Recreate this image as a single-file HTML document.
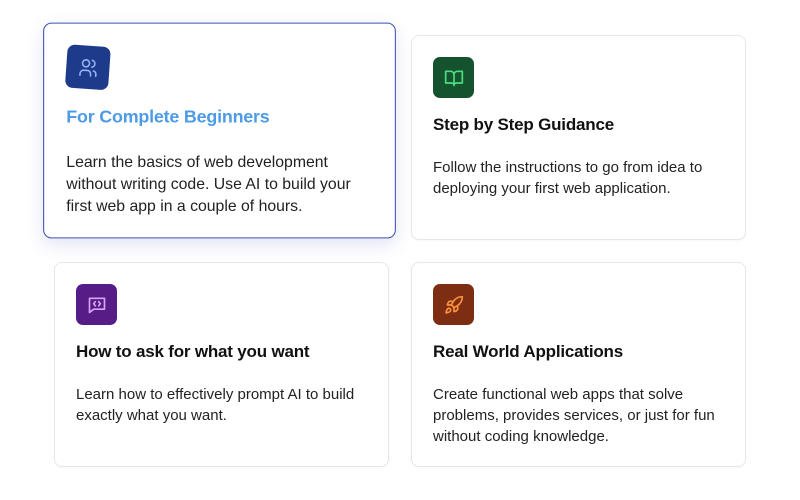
<!DOCTYPE html>
<html><head><style>
*{margin:0;padding:0;box-sizing:border-box}
body{width:800px;height:500px;background:#fff;font-family:"Liberation Sans",sans-serif;position:relative;overflow:hidden}
.card{position:absolute;width:335px;height:205px;border:1px solid #e7e7ea;border-radius:8px;background:#fff;box-shadow:0 1px 2px rgba(0,0,0,.04)}
.ic{position:absolute;left:21px;top:21px;width:41px;height:41px;border-radius:7px;display:flex;align-items:center;justify-content:center}
.t{position:absolute;left:21px;top:77px;font-size:17px;line-height:24px;font-weight:bold;color:#111;letter-spacing:-0.2px}
.d{position:absolute;left:21px;top:121px;width:290px;font-size:15px;line-height:21px;color:#222}
.hov{left:54px;top:35px;border:1px solid #3f51b5;transform:translate(-2px,-7px) scale(1.053);transform-origin:center;box-shadow:0 6px 16px rgba(63,81,181,.15)}
</style></head><body>
<div class="card hov">
 <div class="ic" style="background:#1e3a8a;transform:rotate(4deg)"><svg width="20" height="20" viewBox="0 0 24 24" fill="none" stroke="#93b4f5" stroke-width="1.8" stroke-linecap="round"><circle cx="9" cy="7" r="4"/><path d="M3 21v-2a4 4 0 0 1 4-4h4a4 4 0 0 1 4 4v2"/><path d="M16 3.1a4 4 0 0 1 0 7.8M21 21v-2a4 4 0 0 0-3-3.9"/></svg></div>
 <div class="t" style="color:#4d9be6">For Complete Beginners</div>
 <div class="d">Learn the basics of web development without writing code. Use AI to build your first web app in a couple of hours.</div>
</div>
<div class="card" style="left:411px;top:35px">
 <div class="ic" style="background:#14532d"><svg width="20" height="20" viewBox="0 0 24 24" fill="none" stroke="#4ade80" stroke-width="2" stroke-linejoin="round"><path d="M2 4h6a4 4 0 0 1 4 4v13a3 3 0 0 0-3-3H2zM22 4h-6a4 4 0 0 0-4 4v13a3 3 0 0 1 3-3h7z"/></svg></div>
 <div class="t">Step by Step Guidance</div>
 <div class="d">Follow the instructions to go from idea to deploying your first web application.</div>
</div>
<div class="card" style="left:54px;top:262px">
 <div class="ic" style="background:#581c87"><svg width="20" height="20" viewBox="0 0 24 24" fill="none" stroke="#d8a4f5" stroke-width="2" stroke-linecap="round" stroke-linejoin="round"><path d="M3 4h18v13H8l-5 4z"/><path d="M10 8l-2 2.5 2 2.5M14 8l2 2.5-2 2.5"/></svg></div>
 <div class="t">How to ask for what you want</div>
 <div class="d">Learn how to effectively prompt AI to build exactly what you want.</div>
</div>
<div class="card" style="left:411px;top:262px">
 <div class="ic" style="background:#7c2d12"><svg width="20" height="20" viewBox="0 0 24 24" fill="none" stroke="#fb923c" stroke-width="2" stroke-linecap="round" stroke-linejoin="round"><path d="M4.5 16.5c-1.5 1.3-2 5-2 5s3.7-.5 5-2c.7-.8.7-2.1-.1-2.9a2.2 2.2 0 0 0-2.9-.1z"/><path d="M12 15l-3-3a22 22 0 0 1 2-4A13 13 0 0 1 22 2c0 2.7-.8 7.5-6 11a22 22 0 0 1-4 2z"/><path d="M9 12H4s.6-3 2-4c1.6-1.1 5 0 5 0M12 15v5s3-.6 4-2c1.1-1.6 0-5 0-5"/></svg></div>
 <div class="t">Real World Applications</div>
 <div class="d">Create functional web apps that solve problems, provides services, or just for fun without coding knowledge.</div>
</div>
</body></html>
